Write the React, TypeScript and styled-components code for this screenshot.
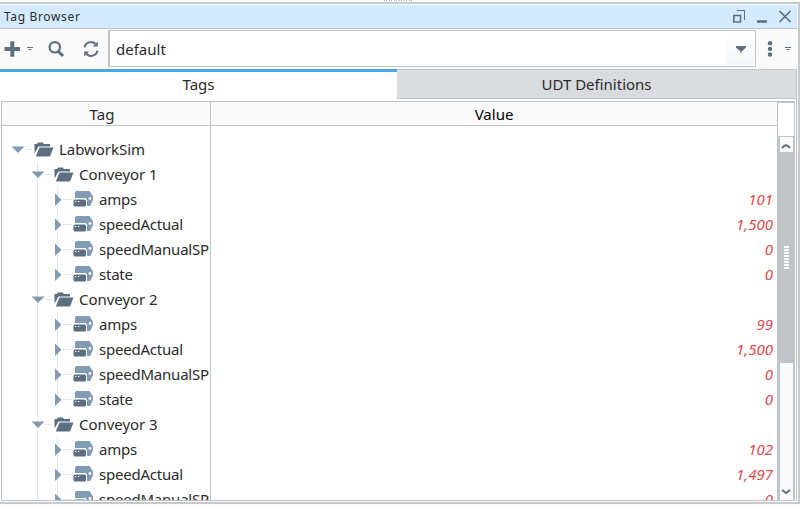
import React from "react";
import styled, { createGlobalStyle } from "styled-components";

const line = "#bfc4c8";
const slate = "#5b6f80";
const steel = "#819bb4";
const guide = "#e2e5e8";

const Global = createGlobalStyle`
  * { box-sizing: border-box; }
  html, body { margin: 0; padding: 0; }
  body { font-family: "Noto Sans", sans-serif; font-size: 15px; color: #2b2b2b; overflow: hidden; background: #fafafa; }
  svg { display: block; flex: none; }
`;

const Window = styled.div`
  width: 800px; height: 505px; background: #fafafa;
  display: flex; flex-direction: column; overflow: hidden;
`;
const Grip = styled.div`
  height: 2px; flex: none; padding-left: 384px;
`;
const Frame = styled.div`
  height: 502px; flex: none; display: flex; flex-direction: column;
  border-top: 2px solid #c6cace; border-right: 2px solid #c6cace; border-bottom: 2px solid #c6cace;
  padding: 1px 1px 1px 0; background: #fafafa;
`;
const TitleBar = styled.header`
  height: 24px; flex: none; background: #d4ebff; border-bottom: 1px solid ${line};
  display: flex; align-items: center; padding: 0 4px; font-size: 12px; letter-spacing: 0.65px;
`;
const Title = styled.span`flex: 1;`;
const Toolbar = styled.div`
  height: 40px; flex: none; display: flex; align-items: flex-start; padding-top: 1px;
`;
const Tools = styled.div`width: 108px; height: 37px;`;
const Combo = styled.div`
  width: 648px; height: 37px; border: 1px solid ${line}; border-left-width: 2px; background: #fff;
  display: flex; align-items: center; justify-content: space-between; padding-left: 6px;
`;
const ComboButton = styled.div`
  width: 29px; height: 33px; background: linear-gradient(#fff, #f3f6f8);
  display: flex; align-items: center; justify-content: center;
`;
const Panel = styled.div`
  flex: none; width: 797px; border-right: 1px solid ${line}; background: #fff;
`;
const Tabs = styled.div`height: 32px; display: flex; align-items: flex-start;`;
const Tab = styled.div<{ $active?: boolean }>`
  height: 30px; display: flex; align-items: center; justify-content: center;
  width: ${p => (p.$active ? 397 : 399)}px;
  background: ${p => (p.$active ? "#fff" : "#d9dcde")};
  border-top: ${p => (p.$active ? "3px solid #4ba6e0" : `1px solid ${line}`)};
  border-bottom: ${p => (p.$active ? "none" : `1px solid ${line}`)};
  padding-bottom: ${p => (p.$active ? 3 : 0)}px;
`;
const Body = styled.div`
  height: 400px; display: flex; background: #fff; margin: 0 1px 0 1px;
  border: 1px solid ${line};
`;
const Column = styled.div<{ $w: number }>`
  width: ${p => p.$w}px; border-right: 1px solid ${line}; overflow: hidden;
`;
const HeaderCell = styled.div<{ $value?: boolean }>`
  height: 24px; background: #fafafa; border-bottom: 1px solid ${line};
  display: flex; align-items: center; justify-content: center;
  padding: 1px ${p => (p.$value ? 0 : 8)}px 0 0;
  color: ${p => (p.$value ? "#000" : "#2b2b2b")};
`;
const Rows = styled.div`padding-top: 11px;`;
const TreeRow = styled.div`
  height: 25px; display: flex; align-items: center; white-space: nowrap;
`;
const Label = styled.span<{ $leaf: boolean }>`
  padding-bottom: 2px; letter-spacing: ${p => (p.$leaf ? -0.22 : -0.04)}px;
`;
const ValueRow = styled.div`
  height: 25px; display: flex; align-items: center; justify-content: flex-end;
  padding: 0 4px 2px 0; color: #dd4a4e; font-style: italic; font-size: 15px;
`;
const Scroll = styled.div`
  width: 16px; display: flex; flex-direction: column; border-top: 1px solid ${line};
`;
const Corner = styled.div`height: 33px; flex: none;`;
const Track = styled.div`
  flex: 1; border: 1px solid ${line}; border-width: 1px 1px 0 2px; background: #fafafa;
  display: flex; flex-direction: column;
`;
const Arrow = styled.div<{ $down?: boolean }>`
  height: 15px; flex: none; display: flex; align-items: center; justify-content: center;
  padding: ${p => (p.$down ? "0 2px 2px 0" : "2px 2px 0 0")};
`;
const Thumb = styled.div`
  height: 211px; flex: none; background: ${line}; display: flex; align-items: center; justify-content: center;
`;
const Spacer = styled.div`flex: 1;`;
const Branch = styled.span<{ $w: number }>`width: ${p => p.$w}px; height: 25px; flex: none;`;
const IconSlot = styled.span<{ $leaf: boolean }>`width: ${p => (p.$leaf ? 26 : 25)}px; flex: none;`;

const Folder = () => (
  <svg width="20" height="16" viewBox="0.5 0.5 20 16" fill={slate}>
    <path d="M1 12V2.500h2.500L4.500 1h5l.8 1.500H16.500V5H5z" />
    <path d="M6 6H20L16.500 15H2.300z" />
  </svg>
);
const TagIcon = () => (
  <svg width="21" height="17" viewBox="0 0 21 17">
    <path fill={steel} d="M3 0h13.500L20 5.500V9L17.200 15H14V9L12.500 7H2V1.500z" />
    <circle cx="17" cy="7.500" r="1.400" fill="#fff" />
    <rect x="0.500" y="8.400" width="12.500" height="7.200" rx="1.500" fill={slate} />
    <path d="M2 10.500h1.300M5 10.500h1.300" stroke="#fff" strokeWidth="1.200" />
  </svg>
);

type Item = { label: string; level: 0 | 1 | 2; value?: string };
const conveyor = (n: number, amps: string, speed: string): Item[] => [
  { label: `Conveyor ${n}`, level: 1 },
  { label: "amps", level: 2, value: amps },
  { label: "speedActual", level: 2, value: speed },
  { label: "speedManualSP", level: 2, value: "0" },
  { label: "state", level: 2, value: "0" },
];
const items: Item[] = [
  { label: "LabworkSim", level: 0 as const },
  ...conveyor(1, "101", "1,500"),
  ...conveyor(2, "99", "1,500"),
  ...conveyor(3, "102", "1,497"),
].slice(0, 15);

const Guides = ({ level, last }: { level: number; last: boolean }) => {
  const x = 16 + level * 20;
  return (
    <svg width={x + 16} height="25">
      {level > 0 && <path d="M35.500 0V25" stroke={guide} />}
      {level === 2 && <path d={`M55.500 0V${last ? 12 : 25}`} stroke={guide} />}
      <path d={`M${x + (level === 2 ? 5 : 7)} 12.500H${x + 14}`} stroke={guide} />
      {level < 2
        ? <path d={`M${x - 6.5} 9.500H${x + 6.5}L${x} 16z`} fill={steel} />
        : <path d="M53 6.500V19L59.500 12.800z" fill={steel} />}
    </svg>
  );
};

export default function App() {
  return (
    <>
      <Global />
      <Window>
        <Grip>
          <svg width="30" height="1"><path d="M0 .5H29" stroke="#b2b2b2" strokeDasharray="1 1 1 2" /></svg>
        </Grip>
        <Frame>
          <TitleBar>
            <Title>Tag Browser</Title>
            <svg width="60" height="23" fill="none" stroke={slate}>
              <path d="M0.800 10.500h6.700v6.500H0.800z" strokeWidth="1.600" />
              <path d="M4 5.500h7.500V15" />
              <path d="M24 16.500h10" strokeWidth="2.500" />
              <path d="M46.500 6l11 11M57.500 6L46.500 17" strokeWidth="1.700" />
            </svg>
          </TitleBar>
          <Toolbar>
            <Tools>
              <svg width="108" height="37" stroke={slate} fill="none">
                <path d="M4.500 19h15.500M12.300 11.300v15.400" strokeWidth="4" />
                <path d="M27 17.500h6M28.500 19.500h3" />
                <circle cx="54.800" cy="17.300" r="5.200" strokeWidth="2.200" />
                <path d="M58.500 21.500l4.500 4.500" strokeWidth="3" />
                <path d="M84.500 17.200a6.500 6.500 0 0 1 11-3.200M97.500 20.800a6.500 6.500 0 0 1-11 3.200" strokeWidth="1.900" />
                <path d="M97.800 11.500v5h-5zM84.200 26.500v-5h5z" fill={slate} stroke="none" />
              </svg>
            </Tools>
            <Combo>
              default
              <ComboButton>
                <svg width="12" height="8" fill={slate}><path d="M1 1h10v1.500L6.500 6.500V8H5.500V6.500L1 2.500z" /></svg>
              </ComboButton>
            </Combo>
            <svg width="40" height="37" fill={slate}>
              <circle cx="14" cy="13.200" r="2.200" /><circle cx="14" cy="18.900" r="2.200" /><circle cx="14" cy="24.500" r="2.200" />
              <path d="M29 17.500h6M30.500 19.500h3" stroke={slate} />
            </svg>
          </Toolbar>
          <Panel>
            <Tabs><Tab $active>Tags</Tab><Tab>UDT Definitions</Tab></Tabs>
            <Body>
              <Column $w={209}>
                <HeaderCell>Tag</HeaderCell>
                <Rows>
                  {items.map((it, i) => (
                    <TreeRow key={i}>
                      <Branch $w={it.level === 2 ? 71 : 32 + it.level * 20}>
                        <Guides level={it.level} last={it.label === "state"} />
                      </Branch>
                      <IconSlot $leaf={it.level === 2}>{it.level < 2 ? <Folder /> : <TagIcon />}</IconSlot>
                      <Label $leaf={it.level === 2}>{it.label}</Label>
                    </TreeRow>
                  ))}
                </Rows>
              </Column>
              <Column $w={567}>
                <HeaderCell $value>Value</HeaderCell>
                <Rows>{items.map((it, i) => <ValueRow key={i}>{it.value}</ValueRow>)}</Rows>
              </Column>
              <Scroll>
                <Corner />
                <Track>
                  <Arrow>
                    <svg width="10" height="6" fill="none" stroke={slate} strokeWidth="2"><path d="M1 5l2-2 2-1 2 1 2 2" /></svg>
                  </Arrow>
                  <Thumb>
                    <svg width="5" height="23"><path d="M2.500 0v23" stroke="#fff" strokeWidth="5" strokeDasharray="2 1" /></svg>
                  </Thumb>
                  <Spacer />
                  <Arrow $down>
                    <svg width="10" height="6" fill="none" stroke={slate} strokeWidth="2"><path d="M1 1l4 3 4-3" /></svg>
                  </Arrow>
                </Track>
              </Scroll>
            </Body>
          </Panel>
        </Frame>
      </Window>
    </>
  );
}
